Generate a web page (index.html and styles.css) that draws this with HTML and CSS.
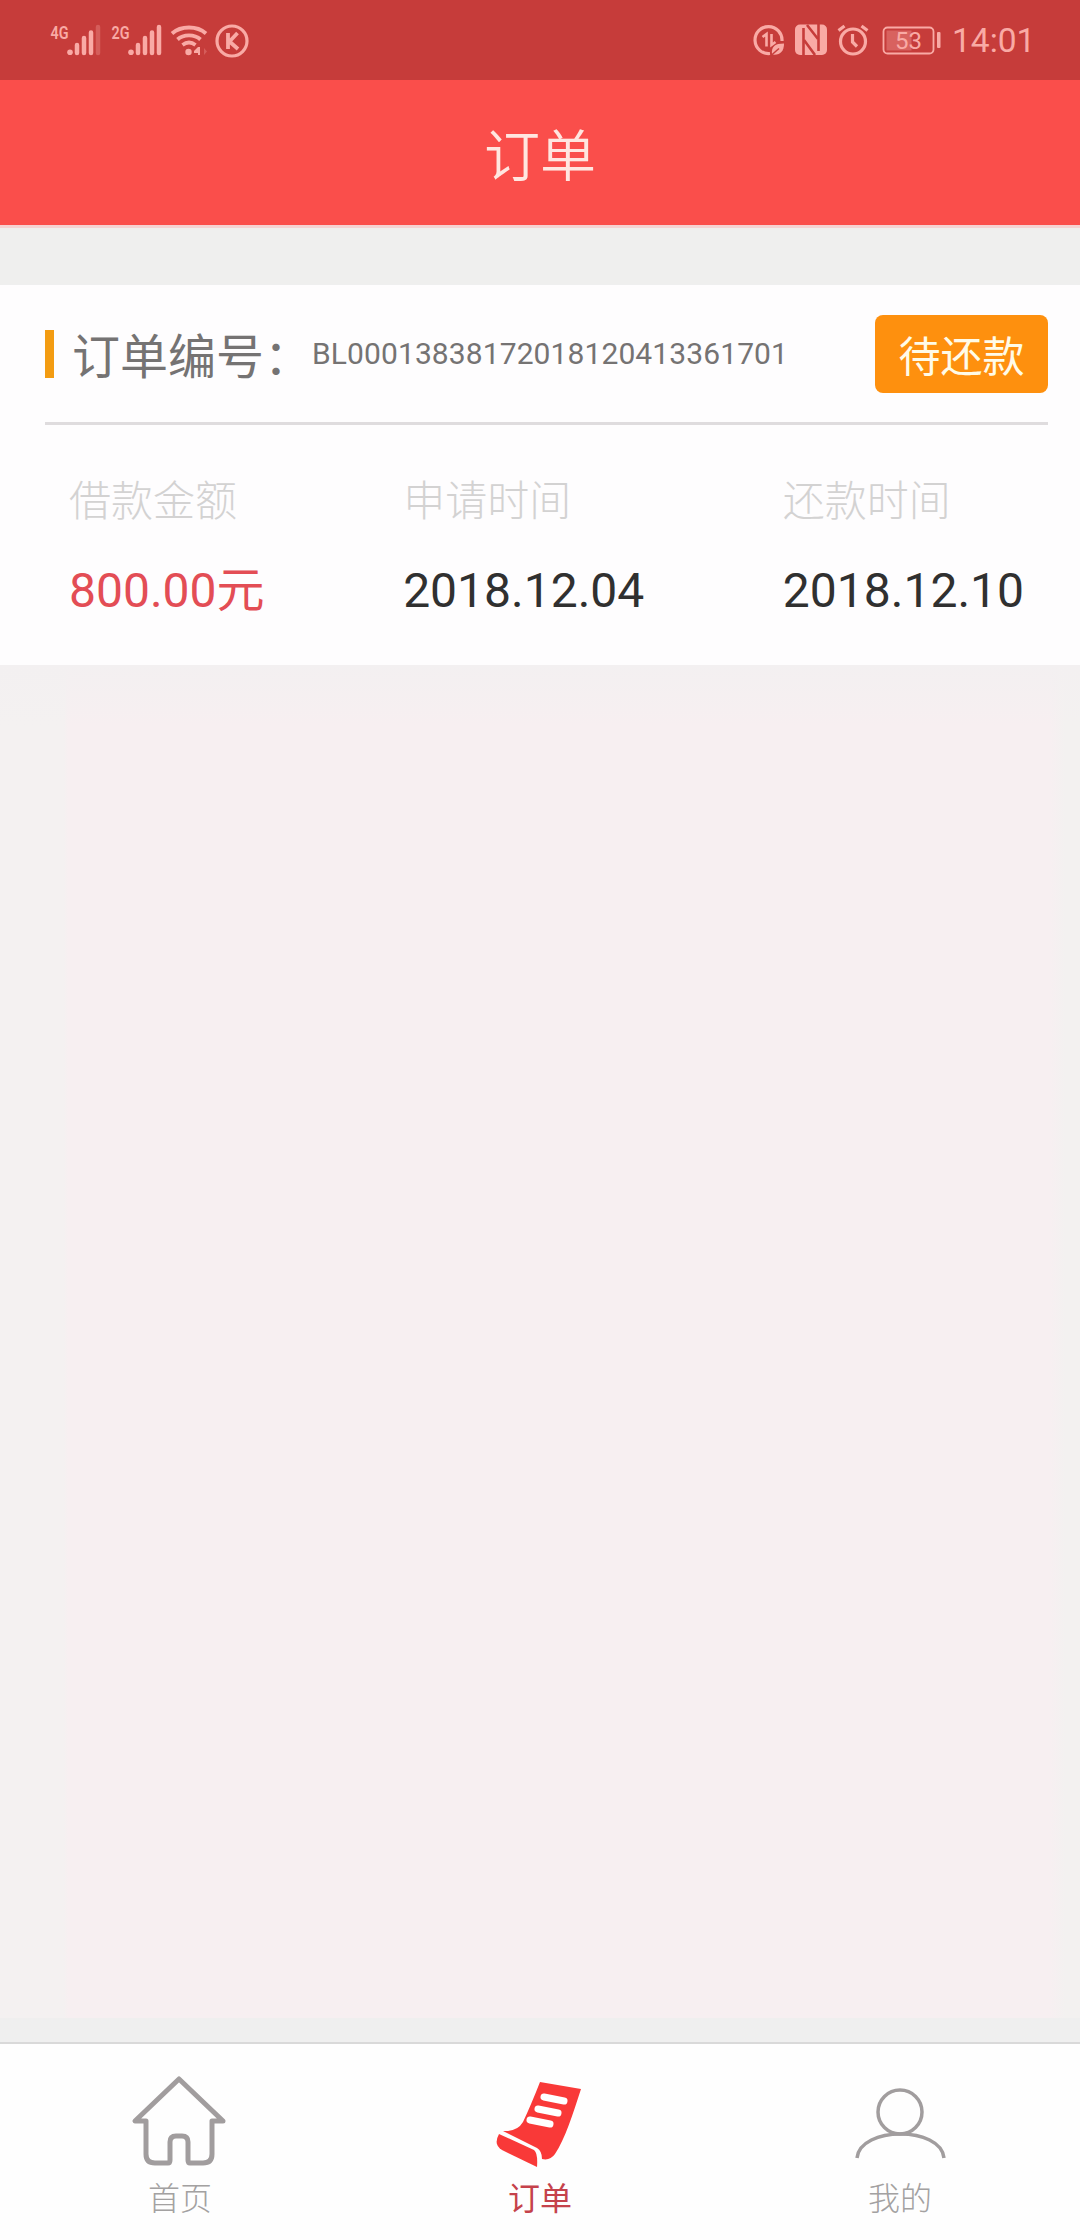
FILE: index.html
```html
<!DOCTYPE html>
<html lang="zh-CN">
<head>
    <meta charset="UTF-8">
    <meta name="viewport" content="width=device-width, initial-scale=1.0">
    <title>订单</title>
    <link rel="stylesheet" href="styles.css">
</head>
<body>
    <!-- 状态栏 -->
    <div class="status-bar">
        <div class="status-left">
            <svg class="signal" width="52" height="34" viewBox="50 23 52 34">
                <text class="net" x="50.5" y="38.5" textLength="18" lengthAdjust="spacingAndGlyphs">4G</text>
                <circle cx="70" cy="52.3" r="2.8"/>
                <path class="bar" d="M77 45v8M84 38v15M91 32.500v20.500"/>
                <path class="bar dim" d="M98 27v26"/>
            </svg>
            <svg class="signal" width="52" height="34" viewBox="111 23 52 34">
                <text class="net" x="111.500" y="38.5" textLength="18" lengthAdjust="spacingAndGlyphs">2G</text>
                <circle cx="131" cy="52.3" r="2.8"/>
                <path class="bar" d="M138 45v8M145 38v15M152 32.500v20.500M159 27v26"/>
            </svg>
            <svg class="wifi" width="38" height="34" viewBox="170 23 38 34">
                <path class="line thick" d="M172 33.500c9-8 25-8 34 0M177.500 39.500c6-5.500 17-5.500 23 0M182.500 45c4-3 9-3 13 0"/>
                <circle cx="188.500" cy="52" r="3.2"/>
                <path d="M200 47v8h-2v-2h-4v-2l4-4z"/>
                <path class="dim" d="M204 48l3 3.500-3 3.500z"/>
            </svg>
            <svg class="k-icon" width="36" height="36" viewBox="214 23 36 36">
                <circle class="line" cx="232" cy="41" r="15"/>
                <path class="line thick" d="M228 33v16M237.500 33l-8 8.500 8.500 7.500"/>
            </svg>
        </div>
        <div class="status-right">
            <svg width="32" height="34" viewBox="753 23 32 34">
                <path class="line" d="M782 41a13.500 13.500 0 1 0-12 12.500"/>
                <path class="line thin" d="M762.500 37l4-3v12.500M771.500 34v11l4-3"/>
                <path d="M772 54.500c-1-8 3-11 12-11 0 8-4 12-12 11z"/>
                <path class="cut thin-cut" d="M771 55.500l8-7"/>
            </svg>
            <svg class="nfc" width="34" height="34" viewBox="794 23 34 34">
                <rect x="795" y="24.500" width="32" height="30.500" rx="5"/>
                <path class="cut" d="M803.500 55V28M818.500 24v27"/>
                <path class="cut" d="M807 25l11 14M804 40l11 15"/>
            </svg>
            <svg class="alarm" width="34" height="34" viewBox="836 23 34 34">
                <circle class="line" cx="853" cy="41.500" r="12.500"/>
                <path class="line" d="M838.500 30.500l6-4.500M861.500 26l6 4.500M852.500 34v8l4.500 4.500"/>
            </svg>
            <svg class="battery" width="60" height="34" viewBox="882 23 60 34">
                <rect class="outline" x="883.500" y="27.500" width="50" height="26" rx="4"/>
                <rect class="fill" x="886.500" y="30.500" width="25" height="20"/>
                <rect x="937" y="32" width="3.500" height="16" rx="1"/>
                <text class="percent" x="895" y="48.500" textLength="27">53</text>
            </svg>
            <span class="time">14:01</span>
        </div>
    </div>

    <div class="header">订单</div>

    <!-- 订单列表 -->
    <div class="content">
        <div class="order-card">
            <div class="order-head">
                <span class="mark"></span>
                <span class="order-label">订单编号：</span>
                <span class="order-no">BL00013838172018120413361701</span>
                <span class="order-status">待还款</span>
            </div>
            <div class="order-info">
                <div class="info-item">
                    <div class="info-name">借款金额</div>
                    <div class="info-value money">800.00元</div>
                </div>
                <div class="info-item">
                    <div class="info-name">申请时间</div>
                    <div class="info-value">2018.12.04</div>
                </div>
                <div class="info-item">
                    <div class="info-name">还款时间</div>
                    <div class="info-value">2018.12.10</div>
                </div>
            </div>
        </div>
        <div class="list-empty"></div>
    </div>

    <!-- 底部导航 -->
    <div class="tab-bar">
        <a class="tab">
            <svg width="100" height="100" viewBox="1 0 100 100">
                <path class="home" d="M50 13L6 55h11v33q0 9 9 9h13q2 0 2-3V76q0-6 6-6h6q6 0 6 6v18q0 3 2 3h13q9 0 9-9V55h11z"/>
            </svg>
            <span>首页</span>
        </a>
        <a class="tab active">
            <svg width="100" height="100" viewBox="2 0 100 100">
                <path class="paper" d="M52 16L93 23C85 48 77 73 67 88Q62 95 54 93Q54 85 49 82L15 65Q29 66 35 56Q43 39 52 16z"/>
                <path class="paper" d="M11 68L46 84Q50 87 49 101L14 84Q5 79 11 68z"/>
                <path class="paper-line" d="M56 31l20 4M50 43l20 4M42 54l20 4"/>
            </svg>
            <span>订单</span>
        </a>
        <a class="tab">
            <svg width="100" height="100" viewBox="0 0 100 100">
                <circle class="user" cx="50" cy="46" r="22"/>
                <path class="user" d="M7 92C10 60 91 60 94 92"/>
            </svg>
            <span>我的</span>
        </a>
    </div>
</body>
</html>
```

FILE: styles.css
```css
* {
    box-sizing: border-box;
}

body {
    margin: 0;
    height: 2240px;
    display: flex;
    flex-direction: column;
    font-family: Roboto, "Noto Sans CJK SC", sans-serif;
    background-color: #f5f0f1;
}

/* 状态栏 */
.status-bar {
    height: 80px;
    padding: 0 48px 0 50px;
    display: flex;
    justify-content: space-between;
    background-color: #c63c3a;
    color: #f9aaa5;
}

.status-left,
.status-right {
    display: flex;
    align-items: flex-start;
    padding-top: 23px;
}

.status-bar svg {
    display: block;
    fill: #f9aaa5;
}

.signal {
    margin-right: 9px;
}

.wifi {
    margin-left: -2px;
    margin-right: 6px;
}

.nfc {
    margin-left: 9px;
    margin-right: 8px;
}

.battery {
    margin-left: 12px;
    margin-right: 10px;
}

.net {
    font-size: 18px;
    font-weight: 600;
}

.bar {
    stroke: #f9aaa5;
    stroke-width: 4.5;
    stroke-linecap: round;
}

.dim {
    opacity: 0.3;
}

.status-bar .line {
    fill: none;
    stroke: #f9aaa5;
    stroke-width: 3.2;
}

.status-bar .thin {
    stroke-width: 2.6;
}

.status-bar .thick {
    stroke-width: 3.8;
}

.status-bar .cut {
    fill: none;
    stroke: #c63c3a;
    stroke-width: 2.6;
}

.status-bar .thin-cut {
    stroke-width: 1.5;
}

.status-bar .outline {
    fill: none;
    stroke: #f9aaa5;
    stroke-width: 1.8;
}

.battery .fill {
    opacity: 0.35;
}

.percent {
    font-size: 24px;
}

.time {
    width: 80px;
    font-size: 33.5px;
    line-height: 36px;
    white-space: nowrap;
}

.header {
    height: 145px;
    padding-top: 4px;
    background-color: #fa4e4b;
    color: #ffe6e0;
    font-size: 56px;
    font-weight: 350;
    line-height: 147px;
    text-align: center;
}

/* 订单列表 */
.content {
    flex: 1;
    display: flex;
    flex-direction: column;
    padding-top: 57px;
    border-top: 3px solid #f5d2d2;
    border-bottom: 24px solid #efefef;
    background-color: #efefee;
}

.order-card {
    height: 380px;
    padding: 0 32px 0 45px;
    background-color: #fefdfe;
    box-shadow: 0 1px 3px #efefef;
}

.order-head {
    height: 140px;
    display: flex;
    align-items: center;
    border-bottom: 3px solid #dfdcde;
    color: #757373;
}

.mark {
    width: 9px;
    height: 48px;
    margin-right: 18px;
    background-color: #f39c12;
}

.order-label {
    width: 240px;
    padding-top: 9px;
    font-size: 48px;
    line-height: 70px;
    white-space: nowrap;
}

.order-no {
    font-size: 30px;
    letter-spacing: 0.1px;
}

.order-status {
    width: 173px;
    height: 78px;
    padding-top: 4px;
    margin-left: auto;
    border-radius: 8px;
    background-color: #fe900e;
    color: #fffbe8;
    font-size: 42px;
    line-height: 78px;
    text-align: center;
}

.order-info {
    display: flex;
    justify-content: space-between;
    padding: 46px 24px 0;
}

.info-name {
    color: #d3d2d2;
    font-size: 42px;
    font-weight: 300;
    line-height: 62px;
}

.info-value {
    margin-top: 22px;
    color: #303030;
    font-size: 48px;
    line-height: 72px;
}

.money {
    color: #e34d55;
}

.list-empty {
    flex: 1;
    background: linear-gradient(#f3f0f1, #f3f0f100) top / 100% 60px no-repeat,
                linear-gradient(to right, #f4f1f1 64px, #f7eff1 68px, #f7eff1 1050px, #f3f1f0 1065px);
}

/* 底部导航 */
.tab-bar {
    height: 198px;
    display: flex;
    border-top: 2px solid #d9d9d9;
    background-color: #fefefe;
}

.tab {
    flex: 1;
    display: flex;
    flex-direction: column;
    align-items: center;
    padding-top: 22px;
    color: #a3a1a1;
    font-size: 32px;
    font-weight: 300;
    line-height: 48px;
}

.tab span {
    margin-top: 9px;
}

.tab.active {
    color: #c5424b;
    font-weight: 400;
}

.tab svg {
    fill: none;
    overflow: visible;
}

.home {
    stroke: #a19d9e;
    stroke-width: 5;
    stroke-linejoin: round;
}

.user {
    stroke: #a19d9e;
    stroke-width: 3.5;
}

.paper {
    fill: #f93938;
}

.paper-line {
    stroke: #fff;
    stroke-width: 7;
    stroke-linecap: round;
}
```
